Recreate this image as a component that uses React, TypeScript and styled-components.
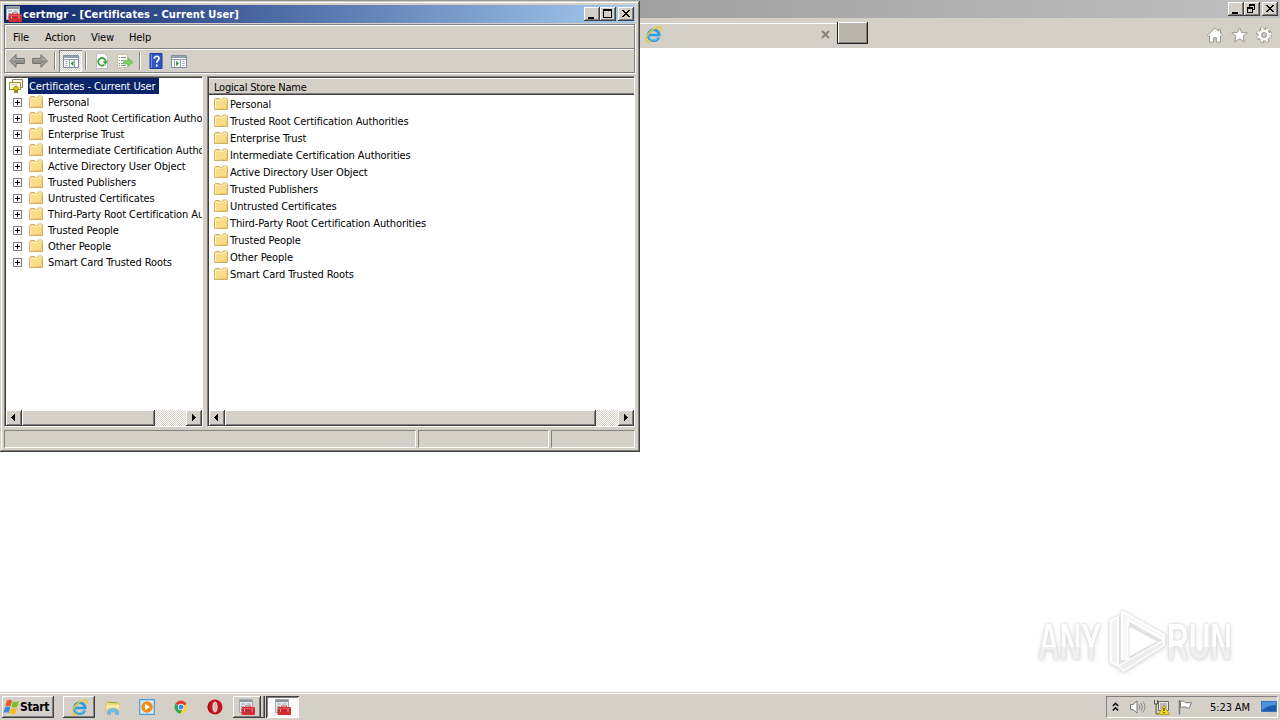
import type { ReactNode } from "react"
import styled, { createGlobalStyle, css } from "styled-components"

const GlobalStyle = createGlobalStyle`
  * { box-sizing: border-box; }
  body {
    margin: 0;
    overflow: hidden;
    background: #fff;
    color: #000;
    font: 11px/16px "DejaVu Sans Condensed", "DejaVu Sans", sans-serif;
    font-stretch: condensed;
    letter-spacing: -0.1px;
    white-space: nowrap;
  }
`

const face = "#d4d0c8"

const raised = css`
  background: ${face};
  box-shadow: inset -1px -1px #404040, inset 1px 1px #fff, inset -2px -2px #808080;
`

const Desktop = styled.div`
  position: relative;
  display: grid;
  grid-template-rows: 18px 30px 1fr 28px;
  width: 1280px;
  height: 720px;
`

/* ---------- browser behind ---------- */

const BrowserTitle = styled.div`
  display: flex;
  justify-content: flex-end;
  align-items: flex-start;
  padding: 2px 2px 0 0;
  background: linear-gradient(90deg, #808080, #c0c0c0);
`

const CaptionButtons = styled.div`
  display: flex;
  button:last-child {
    margin-left: 2px;
  }
`

const CaptionButton = styled.button`
  ${raised}
  width: 16px;
  height: 14px;
  padding: 0;
  border: 0;
  svg {
    display: block;
  }
`

const BrowserBar = styled.div`
  display: flex;
  align-items: flex-start;
  padding-left: 640px;
  background: ${face};
`

const BrowserTab = styled.div`
  display: flex;
  justify-content: space-between;
  align-items: center;
  width: 197px;
  height: 25px;
  margin-top: 5px;
  padding: 0 7px 4px 5px;
  border-top: 1px solid #fff;
`

const NewTab = styled.div`
  width: 31px;
  height: 22px;
  margin-top: 4px;
  background: #bab5ac;
  border: solid #222;
  border-width: 0 1px 1px;
  box-shadow: inset 1px 1px #fff, inset -1px -1px #808080;
`

const BrowserTools = styled.div`
  display: flex;
  gap: 8px;
  margin: 9px 8px 0 auto;
`

const Page = styled.div`
  background: #fff;
`

/* ---------- certmgr window ---------- */

const Window = styled.div`
  position: absolute;
  top: 1px;
  left: 0;
  display: flex;
  flex-direction: column;
  width: 640px;
  height: 451px;
  padding: 4px 5px 4px 4px;
  background: ${face};
  box-shadow: inset -1px -1px #404040, inset 1px 0 ${face}, inset 0 1px ${face}, inset -2px -2px #808080,
    inset 2px 2px #fff;
`

const TitleBar = styled.div`
  display: flex;
  align-items: center;
  flex: none;
  height: 18px;
  padding: 0 1px 0 2px;
  color: #fff;
  font-weight: bold;
  letter-spacing: 0.11px;
  background: linear-gradient(90deg, #0a246a, #a6caf0);
  ${CaptionButtons} {
    margin-left: auto;
  }
`

const TitleText = styled.span`
  margin: 1px 0 0 1px;
`

const MenuBar = styled.div`
  display: flex;
  flex: none;
  height: 25px;
  margin-top: 1px;
  padding: 5px 0 0 8px;
  border: 1px solid #808080;
  box-shadow: inset 1px 1px #fff, 1px 0 #fff;
`

const MenuItem = styled.span<{ $width: number }>`
  width: ${(p) => p.$width}px;
`

const ToolBar = styled.div`
  display: flex;
  align-items: center;
  flex: none;
  height: 24px;
  border: solid #808080;
  border-width: 0 1px 1px 1px;
  box-shadow: inset 1px 1px #fff, 1px 1px #fff;
`

const Tool = styled.span<{ $active?: boolean }>`
  display: flex;
  align-items: center;
  justify-content: center;
  width: 23px;
  height: 22px;
  ${(p) =>
    p.$active &&
    css`
      background: repeating-conic-gradient(#fff 0 25%, ${face} 0 50%) 0 0 / 2px 2px;
      box-shadow: inset 1px 1px #808080, inset -1px -1px #fff;
    `}
`

const Divider = styled.span`
  width: 2px;
  height: 18px;
  margin: 0 3px;
  border-left: 1px solid #808080;
  border-right: 1px solid #fff;
`

const Panes = styled.div`
  display: grid;
  grid-template-columns: 199px 428px;
  gap: 4px;
  flex: none;
  height: 351px;
  margin-top: 3px;
`

const Pane = styled.div`
  display: flex;
  flex-direction: column;
  min-width: 0;
  overflow: hidden;
  padding: 1px 0 0 1px;
  background: #fff;
  border: 1px solid;
  border-color: #808080 #fff #fff #808080;
  box-shadow: inset 1px 1px #404040;
`

const TreeRoot = styled.div`
  display: flex;
  align-items: center;
  height: 16px;
  padding-left: 2px;
`

const Selected = styled.span`
  width: 131px;
  height: 16px;
  margin-left: 4px;
  padding-left: 1px;
  line-height: 17px;
  color: #fff;
  background: #0a246a;
`

const TreeRow = styled.div`
  display: flex;
  align-items: center;
  height: 16px;
  padding-left: 7px;
`

const TreeLabel = styled.span`
  margin: 2px 0 0 4px;
`

const Expander = styled.svg`
  flex: none;
  margin-right: 6px;
`

const ListHeader = styled.div`
  flex: none;
  height: 17px;
  padding-left: 5px;
  line-height: 19px;
  letter-spacing: -0.2px;
  background: ${face};
  border-bottom: 1px solid #404040;
  box-shadow: inset 0 1px #fff, inset 0 -1px #808080;
`

const ListRow = styled.div`
  display: flex;
  align-items: center;
  flex: none;
  height: 17px;
  padding-left: 4px;
`

const ListLabel = styled.span`
  margin: 2px 0 0 1px;
`

const ScrollBar = styled.div`
  display: flex;
  flex: none;
  height: 16px;
  margin-top: auto;
  background: repeating-conic-gradient(#fff 0 25%, ${face} 0 50%) 0 0 / 2px 2px;
`

const ScrollArrow = styled.span`
  ${raised}
  width: 16px;
  height: 16px;
  svg {
    display: block;
  }
  &:last-child {
    margin-left: auto;
  }
`

const Thumb = styled.span<{ $width: number }>`
  ${raised}
  width: ${(p) => p.$width}px;
`

const StatusBar = styled.div`
  display: grid;
  grid-template-columns: 412px 131px 84px;
  gap: 2px;
  height: 18px;
  margin-top: 3px;
`

const StatusCell = styled.div`
  border: 1px solid;
  border-color: #808080 #fff #fff #808080;
`

/* ---------- taskbar ---------- */

const TaskBar = styled.div`
  display: flex;
  align-items: flex-start;
  padding: 4px 2px 0;
  background: ${face};
  box-shadow: inset 0 1px ${face}, inset 0 2px #fff;
`

const StartButton = styled.button`
  ${raised}
  display: flex;
  align-items: center;
  width: 52px;
  height: 22px;
  padding: 0 0 0 1px;
  border: 0;
  font: bold 12px/16px "DejaVu Sans Condensed", sans-serif;
  font-stretch: condensed;
  letter-spacing: -0.35px;
`

const TaskButton = styled.span<{ $width: number; $left?: number; $look?: "up" | "down" }>`
  display: flex;
  align-items: center;
  justify-content: center;
  width: ${(p) => p.$width}px;
  height: 22px;
  margin-left: ${(p) => p.$left ?? 0}px;
  ${(p) => p.$look === "up" && raised}
  ${(p) =>
    p.$look === "down" &&
    css`
      background: #fbfaf8;
      box-shadow: inset 1px 1px #404040, inset -1px -1px #fff, inset 2px 2px #808080;
    `}
`

const StackEdge = styled.span`
  width: 4px;
  height: 22px;
  border-right: 1px solid #404040;
  border-bottom: 1px solid #404040;
  box-shadow: inset -1px 0 #808080;
`

const Tray = styled.div`
  display: flex;
  align-items: center;
  width: 172px;
  height: 22px;
  margin-left: auto;
  padding-left: 5px;
  border: 1px solid;
  border-color: #808080 #fff #fff #808080;
`

const Clock = styled.span`
  width: 51px;
  margin: 1px 0 0 13px;
`

/* ---------- watermark ---------- */

const Watermark = styled.div`
  position: absolute;
  top: 607px;
  left: 1038px;
  display: flex;
  align-items: center;
  width: 200px;
  height: 70px;
  filter: drop-shadow(0 0 1px #d0d0d0) drop-shadow(0 1px 2px #e0e0e0);
`

const Word = styled.span<{ $width: number }>`
  width: ${(p) => p.$width}px;
  font: bold 50px/62px "Liberation Sans", sans-serif;
  letter-spacing: 0;
  transform: scaleX(0.6);
  transform-origin: 0 50%;
`

const Glyphs = styled.span`
  display: inline-block;
  color: transparent;
  background: linear-gradient(#fff 58%, #f0f0f0 58%);
  background-clip: text;
`

/* ---------- icons ---------- */

const Svg = ({ w = 16, h = 16, children }: { w?: number; h?: number; children: ReactNode }) => (
  <svg width={w} height={h} viewBox={`0 0 ${w} ${h}`} fill="none" style={{ flex: "none" }}>
    {children}
  </svg>
)

const Folder = () => (
  <Svg>
    <path d="M1.500 13.500V3.500l1-1h4l1 1.500h1.500l1-2h3.500l1 1v10.500z" fill="#f9dc8a" stroke="#d3b162" />
    <path d="M2.500 4.500v8.500M2.500 4.500h7l1-1.500h3" stroke="#fff0b8" />
    <path d="M7 12.500h6.500V7" stroke="#f2c866" />
  </Svg>
)

const Toolbox = () => (
  <Svg>
    <path d="M.5.5h13v13H.5z" fill="#e9ecee" stroke="#a4abb0" />
    <path d="M1 2h12" stroke="#8a959e" strokeWidth="2" />
    <path d="M2 5h4M7.500 5h4M2 7.500h3M2 10h2" stroke="#9aa4ac" />
    <path d="M6.500 8.500V7h5v1.500" stroke="#c0474b" />
    <rect x="2.500" y="8" width="13.500" height="8" rx="1" fill="#cf2f35" />
    <path d="M3 9.500h12.500" stroke="#e0565a" />
    <path d="M2.500 11.500H16" stroke="#b3242b" />
    <path d="M5.500 10.500v2M13 10.500v2" stroke="#f2c9c9" />
  </Svg>
)

const CertIcon = () => (
  <Svg>
    <path d="M4.500 1.500h10v8h-10z" fill="#fffbe0" stroke="#8a8468" />
    <path d="M1.500 4.500h11v7h-11z" fill="#fffdf0" stroke="#a28a34" />
    <path d="M3.500 6.500h6" stroke="#d8cda0" />
    <path d="M6.500 11l-.500 4.500 2-1 2 1-.500-4.500z" fill="#8c7a10" />
    <circle cx="8" cy="10.500" r="2.300" fill="#e8d000" stroke="#8a7700" strokeWidth=".8" />
  </Svg>
)

const IeIcon = ({ size = 16 }: { size?: number }) => (
  <svg width={size} height={size} viewBox="0 0 16 16" fill="none">
    <path d="M13 10.700A5.200 5.200 0 1 1 13.400 8.500H4.500" stroke="#2f9be0" strokeWidth="2.500" />
    <path d="M12.700 10.700A5 5 0 0 1 3.500 9.800" stroke="#7fd0f5" strokeWidth=".8" />
    <path
      d="M2.300 14.800C-1 13.300 2.300 7 7 3.700c3.700-2.700 7.300-3.700 8-2.100.300.800 0 1.900-.600 2.900M2.300 14.800c.8.300 2.200 0 3.400-.7"
      stroke="#edc62e"
      strokeWidth="1.400"
    />
  </svg>
)

const Minimize = () => (
  <Svg h={14}>
    <path d="M4 10h6v2H4z" fill="#000" shapeRendering="crispEdges" />
  </Svg>
)

const Maximize = () => (
  <Svg h={14}>
    <path d="M3 2h9v9H3zM4 4v6h7V4z" fill="#000" fillRule="evenodd" shapeRendering="crispEdges" />
  </Svg>
)

const Restore = () => (
  <Svg h={14}>
    <path
      d="M5 2h6v6H9v3H3V5h2zM6 4v1h3v2h1V4zM4 7v3h4V7z"
      fill="#000"
      fillRule="evenodd"
      shapeRendering="crispEdges"
    />
  </Svg>
)

const Close = () => (
  <Svg h={14}>
    <path
      d="M4 3h2v1h1v1h2V4h1V3h2v1h-1v1h-1v1H9v1h1v1h1v1h1v1h-2V9H9V8H7v1H6v1H4V9h1V8h1V7h1V6H6V5H5V4H4z"
      fill="#000"
      shapeRendering="crispEdges"
    />
  </Svg>
)

const Captions = ({ restore }: { restore?: boolean }) => (
  <CaptionButtons>
    <CaptionButton>
      <Minimize />
    </CaptionButton>
    <CaptionButton>{restore ? <Restore /> : <Maximize />}</CaptionButton>
    <CaptionButton>
      <Close />
    </CaptionButton>
  </CaptionButtons>
)

const BackArrow = () => (
  <Svg>
    <path d="M.7 8 7 1.700v3.800h8.300v5H7v3.800z" fill="#a8a8a4" stroke="#6b6b6b" />
    <path d="M3 8.500h11.500" stroke="#8c8c88" strokeWidth="2.500" />
  </Svg>
)

const ForwardArrow = () => (
  <Svg>
    <path d="M15.300 8 9 1.700v3.800H.7v5H9v3.800z" fill="#a8a8a4" stroke="#6b6b6b" />
    <path d="M1.500 8.500H13" stroke="#8c8c88" strokeWidth="2.500" />
  </Svg>
)

const TreeToggle = () => (
  <Svg>
    <path d="M.5 2.500h15v12H.5z" fill="#fff" stroke="#7d8ea0" />
    <path d="M1 4h14" stroke="#8ea1b7" strokeWidth="2" />
    <path d="M1 6.500h14M6.500 7v7M11.500 7v7M2.500 8.500h2M2.500 10.500h2M2.500 12.500h2" stroke="#8ea1b7" />
    <path d="M10.500 7.800v5.400L7.500 10.500z" fill="#319b35" />
  </Svg>
)

const PaneToggle = () => (
  <Svg>
    <path d="M.5 2.500h15v12H.5z" fill="#fff" stroke="#7d8ea0" />
    <path d="M1 4h14" stroke="#8ea1b7" strokeWidth="2" />
    <path d="M1 6.500h14M3.500 7v7M9.500 7v7M11.500 8.500h2M11.500 10.500h2M11.500 12.500h2" stroke="#8ea1b7" />
    <path d="M5 7.800v5.400L8 10.500z" fill="#319b35" />
  </Svg>
)

const Refresh = () => (
  <Svg>
    <path d="M2.500.5h8l3 3v12h-11z" fill="#fff" stroke="#b5bcc2" />
    <path d="M10.500 11.700A3.800 3.800 0 1 1 11.800 8.500" stroke="#3aa63d" strokeWidth="1.800" />
    <path d="M8.700 8.300h5L11.500 12z" fill="#3aa63d" />
  </Svg>
)

const Export = () => (
  <Svg>
    <path d="M.5 1.500h10v13H.5z" fill="#fffef0" stroke="#c6c3a6" />
    <path d="M2 4.500h1M4 4.500h5M2 7.500h1M4 7.500h2M2 10.500h1M4 10.500h2M2 12.500h1M4 12.500h5" stroke="#7788a0" />
    <path d="M6.500 7.500H11V5l5 4.300-5 4.200V11H6.500z" fill="#7bd167" stroke="#58b548" strokeWidth=".6" />
  </Svg>
)

const HelpBook = () => (
  <Svg>
    <path d="M2 .5h12v15H2z" fill="#3156c4" stroke="#1f3f9b" />
    <path d="M3.500 1v14" stroke="#6c8ce6" />
    <path d="M6.300 5.700c0-3.400 5-3.100 4.700-.2-.200 1.800-2.300 1.900-2.300 4.200M8.700 11.500v2" stroke="#fff" strokeWidth="1.700" />
  </Svg>
)

const Plus = () => (
  <Expander width="9" height="9" viewBox="0 0 9 9" shapeRendering="crispEdges">
    <path d="M.5.5h8v8h-8z" fill="#fff" stroke="#808080" />
    <path d="M2 4.500h5M4.500 2v5" stroke="#000" />
  </Expander>
)

const ArrowGlyph = ({ right }: { right?: boolean }) => (
  <Svg>
    <path
      d={right ? "M6 4h1v1h1v1h1v1h1v1H9v1H8v1H7v1H6z" : "M9 4H8v1H7v1H6v1H5v1h1v1h1v1h1v1h1z"}
      fill="#000"
      shapeRendering="crispEdges"
    />
  </Svg>
)

const WindowsFlag = () => (
  <Svg w={17} h={17}>
    <path d="M3.800 1.500c2.200-1.200 3.700-1 5.200 0L7.500 7.500c-1.500-1-3.200-1-5.200 0z" fill="#ea5a24" />
    <path d="M9.800 2.200c2 1 3.700.9 6-.2l-1.500 5.500c-2.200 1.100-3.800 1.200-5.700.2z" fill="#7fba2c" />
    <path d="M2 8.400c2.200-1.100 3.700-1 5.200 0l-1.500 5.500c-1.500-1-3.200-1-5.200 0z" fill="#3a8ddd" />
    <path d="M8.100 9c2 1 3.700.9 5.900-.1l-1.500 5.500c-2.200 1.200-3.800 1.200-5.800.2z" fill="#f8bd20" />
  </Svg>
)

const Explorer = () => (
  <Svg>
    <path d="M1 2.500h5l1 1.500h7.500v9H1z" fill="#f5d77b" stroke="#d9b868" strokeWidth=".7" />
    <path d="M3 3.500h9" stroke="#76b95f" />
    <path d="M1.500 6h13v6.500h-13z" fill="#fbe9a5" />
    <path d="M2.500 15.500V12c0-3.500 11-3.500 11 0v3.500h-3v-3h-5v3z" fill="#74bce8" stroke="#5fa9d6" strokeWidth=".6" />
  </Svg>
)

const MediaPlayer = () => (
  <Svg>
    <path d="M.7.7h14.600v14.600H.7z" fill="#d5ebfa" stroke="#4b9bd6" strokeWidth="1.200" />
    <circle cx="8" cy="8" r="5.700" fill="#f38b16" />
    <path d="M6 4.800v6.400L11 8z" fill="#fff" />
  </Svg>
)

const Chrome = () => (
  <Svg>
    <circle cx="8" cy="8" r="6.500" fill="#f9cf32" />
    <path d="M8 8 2.400 4.800A6.500 6.500 0 0 1 13.600 4.800z" fill="#e13d31" />
    <path d="M8 8 2.400 4.800A6.500 6.500 0 0 0 7.500 14.500L10 9z" fill="#32a350" />
    <circle cx="8" cy="8" r="3.200" fill="#fff" />
    <circle cx="8" cy="8" r="2.500" fill="#4687ed" />
  </Svg>
)

const Opera = () => (
  <Svg>
    <circle cx="8" cy="8" r="7.500" fill="#c5121f" />
    <path d="M3 3a7.500 7.500 0 0 0 0 10" stroke="#8f0a12" />
    <ellipse cx="8" cy="8" rx="2.600" ry="5.400" fill="#eee4e0" />
    <ellipse cx="8" cy="8" rx="1.500" ry="4.800" fill="#d7b5b1" />
  </Svg>
)

const HomeIcon = () => (
  <Svg w={17}>
    <path
      d="M9 1 1.300 8.300l1.200 1.200 1-.8v6.500h4.200v-4.500h2.600v4.500h4.200V8.700l1 .8 1.200-1.200-2.200-2.300V2.500h-2v1.500z"
      fill="#fff"
      stroke="#9a968f"
    />
  </Svg>
)

const StarIcon = () => (
  <Svg w={17}>
    <path
      d="m8.500.6 2.200 4.900 5.500.3-4.200 3.500 1.500 5.700-5-3.200-5 3.200L5 9.300.8 5.800l5.500-.3z"
      fill="#fff"
      stroke="#9a968f"
    />
  </Svg>
)

const GearIcon = () => (
  <Svg>
    <circle cx="8" cy="8" r="6.400" stroke="#9a968f" strokeWidth="3" strokeDasharray="3 2.030" />
    <circle cx="8" cy="8" r="4.500" stroke="#9a968f" strokeWidth="4" />
    <circle cx="8" cy="8" r="6.200" stroke="#fff" strokeWidth="2" strokeDasharray="2 3.030" strokeDashoffset="-.5" />
    <circle cx="8" cy="8" r="4.200" stroke="#fff" strokeWidth="2.800" />
    <circle cx="8" cy="8" r="2.300" fill={face} stroke="#9a968f" />
  </Svg>
)

const TabClose = () => (
  <Svg w={9} h={9}>
    <path d="m1 1 7 7M8 1 1 8" stroke="#85817b" strokeWidth="1.800" />
  </Svg>
)

const Chevrons = () => (
  <Svg w={7} h={10}>
    <path d="m.8 4 2.700-2.700L6.200 4M.8 8.500l2.700-2.700 2.700 2.700" stroke="#000" strokeWidth="1.400" />
  </Svg>
)

const Speaker = () => (
  <Svg w={17}>
    <path d="M1.500 5.500h2.500l4-3.500v12l-4-3.500H1.500z" fill="#fff" stroke="#777" />
    <path d="M10 5.500q1.500 2.500 0 5M12 4q2.800 4 0 8M14 2.500q3.800 5.500 0 11" stroke="#8a8a8a" />
  </Svg>
)

const Network = () => (
  <Svg w={17}>
    <path d="M5.500 2.500h10v9h-10z" fill="#eee" stroke="#666" />
    <path d="M7 4h7v6H7z" fill="#b9b9b5" />
    <path d="M1.500 1v4h3V1M3 5v10h3" stroke="#555" />
    <path d="m11 6 5.500 9.500h-11z" fill="#f7d91e" stroke="#aa8a0a" strokeWidth=".7" />
    <path d="M11 9v3M11 13v1.300" stroke="#222" strokeWidth="1.200" />
  </Svg>
)

const FlagIcon = () => (
  <Svg>
    <path d="M2.500 1v14.500" stroke="#777" strokeWidth="1.500" />
    <path
      d="M3.500 2.500c2.500-1.200 4 0 5 1.200h6l-2 5c-2 1-3-.2-4.500-.7-1.500-.4-3 0-4.500.7z"
      fill="#fff"
      stroke="#777"
    />
  </Svg>
)

const ShowDesktop = () => (
  <Svg>
    <path d="M.5 2.500h15v10H.5z" fill="#1d5cac" stroke="#3d72b4" />
    <path d="M1 3h14v3C9 6 5 8 1 11.500z" fill="#4e91dc" />
    <path d="M8 14h7" stroke="#b8c7d8" />
  </Svg>
)

const PlayLogo = () => (
  <svg width="60" height="68" viewBox="0 0 60 68" fill="none" strokeLinejoin="round">
    <path d="M3.500 12.500 11 9v49l-7.500-4z" fill="#f3f3f3" stroke="#fff" strokeWidth="2" />
    <path d="m11 58 46-26v5.500L16.500 63z" fill="#ededed" stroke="#fafafa" strokeWidth="2" />
    <path d="M15 3.500 57 27v5L21 12v39h-6z" fill="#f6f6f6" stroke="#fff" strokeWidth="2.500" />
    <path d="m22 18 29 15.500L22 49z" fill="#fff" stroke="#e2e2e2" />
  </svg>
)

const stores = [
  "Personal",
  "Trusted Root Certification Authorities",
  "Enterprise Trust",
  "Intermediate Certification Authorities",
  "Active Directory User Object",
  "Trusted Publishers",
  "Untrusted Certificates",
  "Third-Party Root Certification Authorities",
  "Trusted People",
  "Other People",
  "Smart Card Trusted Roots",
]

const HScroll = ({ thumb }: { thumb: number }) => (
  <ScrollBar>
    <ScrollArrow>
      <ArrowGlyph />
    </ScrollArrow>
    <Thumb $width={thumb} />
    <ScrollArrow>
      <ArrowGlyph right />
    </ScrollArrow>
  </ScrollBar>
)

const CertManager = () => (
  <Window>
    <TitleBar>
      <Toolbox />
      <TitleText>certmgr - [Certificates - Current User]</TitleText>
      <Captions />
    </TitleBar>
    <MenuBar>
      <MenuItem $width={32}>File</MenuItem>
      <MenuItem $width={46}>Action</MenuItem>
      <MenuItem $width={38}>View</MenuItem>
      <MenuItem $width={30}>Help</MenuItem>
    </MenuBar>
    <ToolBar>
      <Tool>
        <BackArrow />
      </Tool>
      <Tool>
        <ForwardArrow />
      </Tool>
      <Divider />
      <Tool $active>
        <TreeToggle />
      </Tool>
      <Divider />
      <Tool>
        <Refresh />
      </Tool>
      <Tool>
        <Export />
      </Tool>
      <Divider />
      <Tool>
        <HelpBook />
      </Tool>
      <Tool>
        <PaneToggle />
      </Tool>
    </ToolBar>
    <Panes>
      <Pane>
        <TreeRoot>
          <CertIcon />
          <Selected>Certificates - Current User</Selected>
        </TreeRoot>
        {stores.map((name) => (
          <TreeRow key={name}>
            <Plus />
            <Folder />
            <TreeLabel>{name}</TreeLabel>
          </TreeRow>
        ))}
        <HScroll thumb={133} />
      </Pane>
      <Pane>
        <ListHeader>Logical Store Name</ListHeader>
        {stores.map((name) => (
          <ListRow key={name}>
            <Folder />
            <ListLabel>{name}</ListLabel>
          </ListRow>
        ))}
        <HScroll thumb={371} />
      </Pane>
    </Panes>
    <StatusBar>
      <StatusCell />
      <StatusCell />
      <StatusCell />
    </StatusBar>
  </Window>
)

const App = () => (
  <Desktop>
    <GlobalStyle />
    <BrowserTitle>
      <Captions restore />
    </BrowserTitle>
    <BrowserBar>
      <BrowserTab>
        <IeIcon size={17} />
        <TabClose />
      </BrowserTab>
      <NewTab />
      <BrowserTools>
        <HomeIcon />
        <StarIcon />
        <GearIcon />
      </BrowserTools>
    </BrowserBar>
    <Page />
    <TaskBar>
      <StartButton>
        <WindowsFlag />
        Start
      </StartButton>
      <TaskButton $width={32} $left={9} $look="up">
        <IeIcon size={17} />
      </TaskButton>
      <TaskButton $width={34} $left={1}>
        <Explorer />
      </TaskButton>
      <TaskButton $width={34}>
        <MediaPlayer />
      </TaskButton>
      <TaskButton $width={34}>
        <Chrome />
      </TaskButton>
      <TaskButton $width={34}>
        <Opera />
      </TaskButton>
      <TaskButton $width={28} $left={1} $look="up">
        <Toolbox />
      </TaskButton>
      <StackEdge />
      <TaskButton $width={33} $left={1} $look="down">
        <Toolbox />
      </TaskButton>
      <Tray>
        <Chevrons />
        <TaskButton $width={24} $left={6}>
          <Speaker />
        </TaskButton>
        <TaskButton $width={24}>
          <Network />
        </TaskButton>
        <TaskButton $width={24}>
          <FlagIcon />
        </TaskButton>
        <Clock>5:23 AM</Clock>
        <ShowDesktop />
      </Tray>
    </TaskBar>
    <CertManager />
    <Watermark>
      <Word $width={69}>
        <Glyphs>ANY</Glyphs>
      </Word>
      <PlayLogo />
      <Word $width={66}>
        <Glyphs>RUN</Glyphs>
      </Word>
    </Watermark>
  </Desktop>
)

export default App
